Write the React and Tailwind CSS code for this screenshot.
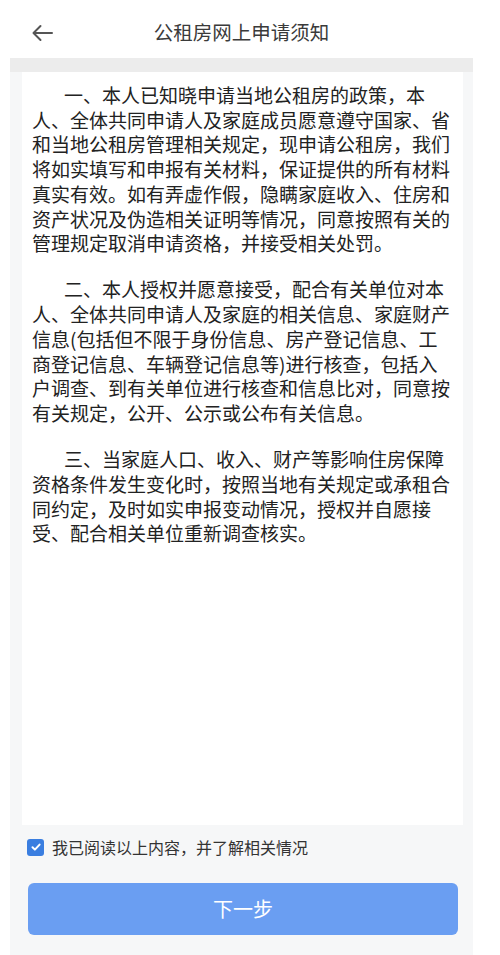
import React, { useState } from 'react';

const paragraphs = [
  '一、本人已知晓申请当地公租房的政策，本人、全体共同申请人及家庭成员愿意遵守国家、省和当地公租房管理相关规定，现申请公租房，我们将如实填写和申报有关材料，保证提供的所有材料真实有效。如有弄虚作假，隐瞒家庭收入、住房和资产状况及伪造相关证明等情况，同意按照有关的管理规定取消申请资格，并接受相关处罚。',
  '二、本人授权并愿意接受，配合有关单位对本人、全体共同申请人及家庭的相关信息、家庭财产信息(包括但不限于身份信息、房产登记信息、工商登记信息、车辆登记信息等)进行核查，包括入户调查、到有关单位进行核查和信息比对，同意按有关规定，公开、公示或公布有关信息。',
  '三、当家庭人口、收入、财产等影响住房保障资格条件发生变化时，按照当地有关规定或承租合同约定，及时如实申报变动情况，授权并自愿接受、配合相关单位重新调查核实。',
];

const App = () => {
  const [agreed, setAgreed] = useState(true);

  return (
    <div
      className="w-[500px] h-[955px] bg-white overflow-hidden"
      style={{ fontFamily: '"Noto Sans CJK SC", "Noto Sans", sans-serif' }}
    >
      {/* header */}
      <div className="h-[58px] w-[483px] flex items-center relative">
        <button className="absolute left-[31px] top-[24px] text-[#555]">
          <svg width="22" height="18" viewBox="0 0 22 18" fill="none" stroke="currentColor" strokeWidth="2" strokeLinecap="round" strokeLinejoin="round">
            <path d="M21 9H3" />
            <path d="M9.5 2L2.5 9l7 7" />
          </svg>
        </button>
        <h1 className="flex-1 text-center text-[19.5px] text-[#3a3a3a] pt-[6px]">公租房网上申请须知</h1>
      </div>

      <div className="ml-[10px] w-[463px] h-[897px] bg-[#f6f7f8] flex flex-col">
        <div className="h-[14px] bg-[#ececec]" />

        <div className="ml-[12px] mr-[10px] h-[753px] bg-white pt-[11px] pl-[10px]">
          {paragraphs.map((p, i) => (
            <p
              key={i}
              className="w-[420px] text-[19px] leading-[24.7px] text-[#222] indent-[32px] mb-[21.5px]"
            >
              {p}
            </p>
          ))}
        </div>

        <label className="flex items-center gap-[8px] ml-[17px] mt-[13px] h-[18px]">
          <button
            onClick={() => setAgreed(!agreed)}
            className={`w-[17px] h-[17px] rounded-[3px] flex items-center justify-center ${agreed ? 'bg-[#3a7ee0]' : 'bg-white border border-[#bbb]'}`}
          >
            {agreed && (
              <svg width="12" height="12" viewBox="0 0 12 12" fill="none" stroke="white" strokeWidth="2" strokeLinecap="round" strokeLinejoin="round">
                <path d="M2.5 6.2l2.4 2.4L9.6 3.6" />
              </svg>
            )}
          </button>
          <span className="text-[16px] text-[#333]">我已阅读以上内容，并了解相关情况</span>
        </label>

        <button className="ml-[18px] mt-[27px] w-[430px] h-[52px] rounded-[6px] bg-[#6a9ef2] text-white text-[20px]">
          下一步
        </button>
      </div>
    </div>
  );
};

export default App;
